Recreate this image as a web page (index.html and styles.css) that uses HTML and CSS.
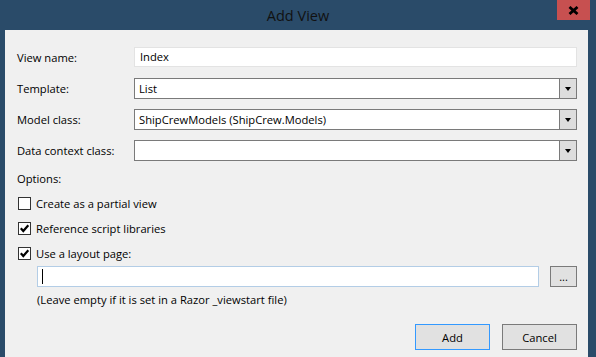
FILE: index.html
```html
<!DOCTYPE html>
<html lang="en">
<head>
  <meta charset="UTF-8" />
  <title>Add View</title>
  <link rel="stylesheet" href="styles.css">
</head>
<body>
  <div class="window">
    <div class="titlebar">
      <span class="title">Add View</span>
      <button class="close" aria-label="Close">
        <svg width="11" height="9" viewBox="0 0 11 9"><path d="M1.5 1 L9.5 8 M9.5 1 L1.5 8" stroke="#000" stroke-width="2.8" fill="none"/></svg>
      </button>
    </div>

    <div class="client">
      <div class="field">
        <label>View name:</label>
        <div class="textbox">Index</div>
      </div>
      <div class="field">
        <label>Template:</label>
        <div class="combo"><span class="value">List</span><span class="arrow"></span></div>
      </div>
      <div class="field">
        <label>Model class:</label>
        <div class="combo"><span class="value">ShipCrewModels (ShipCrew.Models)</span><span class="arrow"></span></div>
      </div>
      <div class="field">
        <label>Data context class:</label>
        <div class="combo"><span class="value"></span><span class="arrow"></span></div>
      </div>

      <div class="options">Options:</div>
      <div class="check"><span class="box"></span>Create as a partial view</div>
      <div class="check"><span class="box checked"><svg width="11" height="11" viewBox="0 0 11 11"><path d="M1.8 5.2 L4.3 8 L9.3 2.3" stroke="#000" stroke-width="2.2" fill="none"/></svg></span>Reference script libraries</div>
      <div class="check"><span class="box checked"><svg width="11" height="11" viewBox="0 0 11 11"><path d="M1.8 5.2 L4.3 8 L9.3 2.3" stroke="#000" stroke-width="2.2" fill="none"/></svg></span>Use a layout page:</div>

      <div class="layout-row">
        <div class="textbox focused"><span class="caret"></span></div>
        <button class="browse">...</button>
      </div>
      <div class="hint">(Leave empty if it is set in a Razor _viewstart file)</div>

      <div class="actions">
        <button class="btn default">Add</button>
        <button class="btn">Cancel</button>
      </div>
    </div>
  </div>
</body>
</html>
```

FILE: styles.css
```css
html, body {
  margin: 0;
  height: 100%;
}

body {
  background: #2a4b69;
  font-family: 'Open Sans', 'Noto Sans', sans-serif;
  font-size: 11.2px;
  color: #000;
  overflow: hidden;
}

.window {
  height: 100%;
  display: flex;
  flex-direction: column;
}

/* Barre de titre */
.titlebar {
  position: relative;
  height: 30px;
  flex: none;
  display: flex;
  align-items: center;
  justify-content: center;
}

.title {
  font-size: 14.5px;
  color: #111;
  margin-top: 1px;
}

.close {
  position: absolute;
  top: 0;
  left: 557px;
  width: 33px;
  height: 20px;
  padding: 0;
  border: none;
  background: #c75050;
  display: flex;
  align-items: center;
  justify-content: center;
}

/* Zone client */
.client {
  flex: 1;
  margin: 0 8px 0 5px;
  background: #f0f0f0;
  padding: 17px 11px 0 12px;
}

.field {
  display: grid;
  grid-template-columns: 117px 1fr;
  align-items: center;
  height: 21px;
  margin-bottom: 10px;
}

.textbox {
  box-sizing: border-box;
  height: 20px;
  align-self: start;
  background: #fff;
  border: 1px solid #e3e3e3;
  padding-left: 5px;
  line-height: 18px;
}

.combo {
  box-sizing: border-box;
  height: 21px;
  display: flex;
  background: #fff;
  border: 1px solid #7a7a7a;
}

.combo .value {
  flex: 1;
  padding-left: 4px;
  line-height: 19px;
}

.combo .arrow {
  width: 16px;
  border-left: 1px solid #7a7a7a;
  background: #dddddd;
  display: flex;
  align-items: center;
  justify-content: center;
}

.combo .arrow::after {
  content: "";
  border-left: 3.5px solid transparent;
  border-right: 3.5px solid transparent;
  border-top: 4px solid #000;
  margin-top: 1px;
}

.options {
  height: 16px;
  line-height: 16px;
  margin-bottom: 8px;
}

.check {
  display: flex;
  align-items: center;
  gap: 5px;
  height: 16px;
  margin: 0 0 9px 1px;
}

.box {
  box-sizing: border-box;
  width: 13px;
  height: 13px;
  border: 1px solid #333;
  background: #fff;
  display: flex;
  align-items: center;
  justify-content: center;
}

.layout-row {
  display: flex;
  gap: 11px;
  margin: -4px 0 0 20px;
  height: 21px;
}

.layout-row .textbox {
  flex: 1;
  height: 21px;
  border-color: #b3cde6;
  padding-left: 4px;
  display: flex;
  align-items: center;
}

.caret {
  width: 1px;
  height: 15px;
  background: #000;
}

.browse {
  width: 27px;
  height: 21px;
  padding: 0;
  border: 1px solid #7a7a7a;
  background: #e1e1e1;
  font-family: inherit;
  font-size: 11px;
  line-height: 14px;
}

.hint {
  margin: 5px 0 0 20px;
  line-height: 16px;
}

.actions {
  display: flex;
  justify-content: flex-end;
  gap: 12px;
  margin-top: 16px;
}

.btn {
  width: 75px;
  height: 26px;
  padding: 0;
  border: 1px solid #7a7a7a;
  background: #e1e1e1;
  font-family: inherit;
  font-size: 11.2px;
  color: #000;
}

.btn.default {
  border-color: #3399ff;
}
```
